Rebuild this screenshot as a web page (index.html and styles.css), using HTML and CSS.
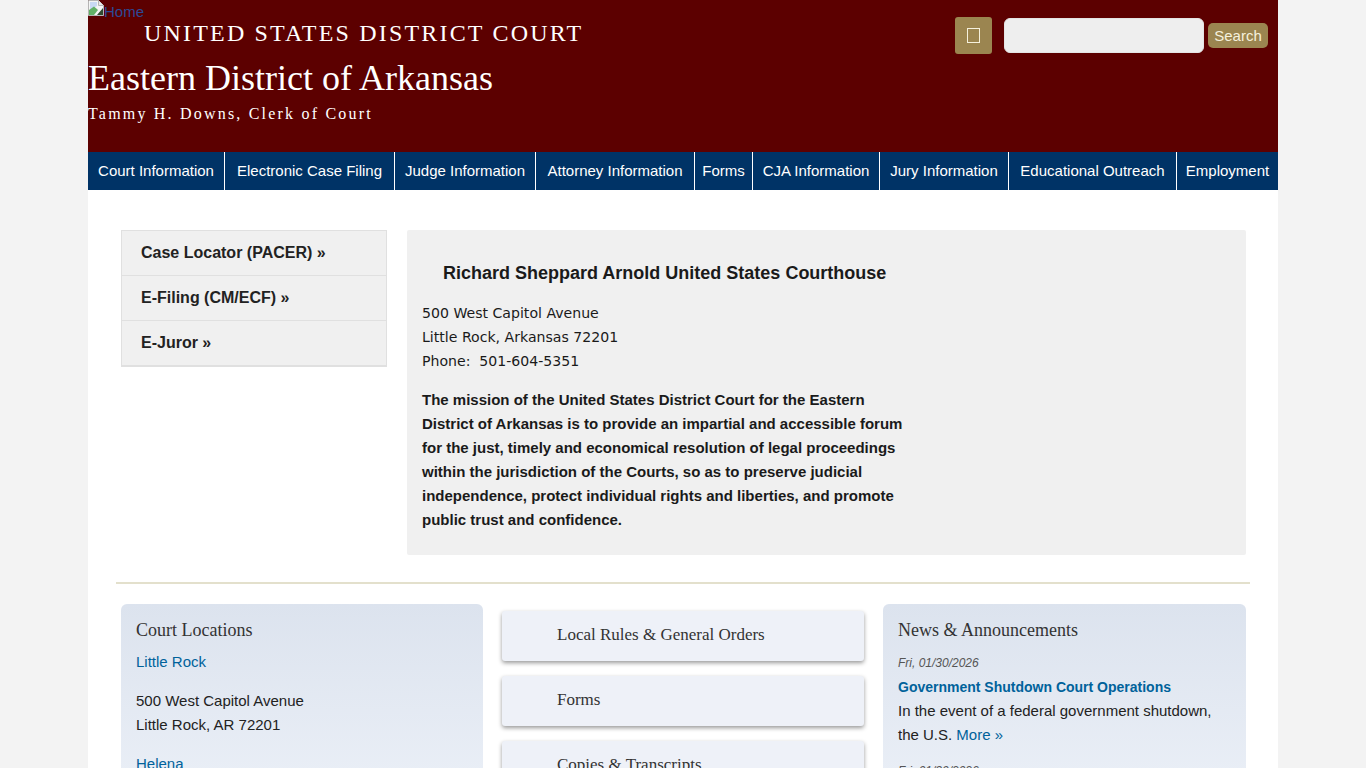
FILE: index.html
```html
<!DOCTYPE html>
<html lang="en">
<head>
  <meta charset="UTF-8" />
  <meta name="viewport" content="width=device-width, initial-scale=1.0"/>
  <title>Eastern District of Arkansas | United States District Court</title>
  <link rel="stylesheet" href="styles.css">
</head>
<body>
  <div id="page">

    <header id="site-header">
      <div class="brand">
        <a class="home-link" href="#">
          <svg class="broken-img" width="16" height="16" viewBox="0 0 16 16" aria-hidden="true">
            <path d="M0.5 0.5H10.5L15.5 5.5V15.5H0.5Z" fill="#f4f4f4" stroke="#b4b4b4"/>
            <path d="M10.5 0.5V5.5H15.5" fill="#e8e8e8" stroke="#b4b4b4"/>
            <path d="M2 2H9V6L2 10Z" fill="#c9d9f4"/>
            <path d="M1 15V10L6 6.5L10 10L6 15Z" fill="#62b066"/>
            <path d="M9 15L15 8V15Z" fill="#2f4a30"/>
          </svg>Home</a>
        <div class="court-line">UNITED STATES DISTRICT COURT</div>
        <div class="district-line">Eastern District of Arkansas</div>
        <div class="clerk-line">Tammy H. Downs, Clerk of Court</div>
      </div>
      <form class="search-box">
        <button type="button" class="menu-btn"><span class="tofu"></span></button>
        <input type="text" class="search-input" />
        <button type="button" class="search-btn">Search</button>
      </form>
    </header>

    <nav id="main-nav">
      <a href="#">Court Information</a>
      <a href="#">Electronic Case Filing</a>
      <a href="#">Judge Information</a>
      <a href="#">Attorney Information</a>
      <a href="#">Forms</a>
      <a href="#">CJA Information</a>
      <a href="#">Jury Information</a>
      <a href="#">Educational Outreach</a>
      <a href="#">Employment</a>
    </nav>

    <main id="content">
      <div class="top-row">
        <ul class="quick-links">
          <li><a href="#">Case Locator (PACER) »</a></li>
          <li><a href="#">E-Filing (CM/ECF) »</a></li>
          <li><a href="#">E-Juror »</a></li>
        </ul>
        <section class="welcome">
          <h2>Richard Sheppard Arnold United States Courthouse</h2>
          <p class="address">500 West Capitol Avenue<br>Little Rock, Arkansas 72201<br>Phone:&nbsp; 501-604-5351</p>
          <p class="mission">The mission of the United States District Court for the Eastern District of Arkansas is to provide an impartial and accessible forum for the just, timely and economical resolution of legal proceedings within the jurisdiction of the Courts, so as to preserve judicial independence, protect individual rights and liberties, and promote public trust and confidence.</p>
        </section>
      </div>

      <hr class="divider">

      <div class="bottom-row">
        <section class="card">
          <h3>Court Locations</h3>
          <a href="#">Little Rock</a>
          <p>500 West Capitol Avenue<br>Little Rock, AR 72201</p>
          <a href="#">Helena</a>
          <p>617 Walnut Street<br>Helena, AR 72342</p>
        </section>

        <div class="tiles">
          <a class="tile" href="#">Local Rules &amp; General Orders</a>
          <a class="tile" href="#">Forms</a>
          <a class="tile" href="#">Copies &amp; Transcripts</a>
        </div>

        <section class="card">
          <h3>News &amp; Announcements</h3>
          <div class="news-item">
            <div class="news-date">Fri, 01/30/2026</div>
            <a class="news-title" href="#">Government Shutdown Court Operations</a>
            <div>In the event of a federal government shutdown, the U.S. <a href="#">More »</a></div>
          </div>
          <div class="news-item">
            <div class="news-date">Fri, 01/30/2026</div>
          </div>
        </section>
      </div>
    </main>

  </div>
</body>
</html>
```

FILE: styles.css
```css
html, body {
  height: 768px;
  overflow: hidden;
}

body {
  margin: 0;
  background-color: #f3f3f3;
  font-family: "Liberation Sans", Arial, sans-serif;
  font-size: 15px;
  line-height: 24px;
  color: #222;
}

a {
  color: #00629b;
  text-decoration: none;
}

#page {
  width: 1190px;
  margin: 0 auto;
  background: #fff;
  min-height: 768px;
}

/* header */
#site-header {
  display: flex;
  justify-content: space-between;
  height: 152px;
  background-color: #5c0000;
}

.brand {
  font-family: "Liberation Serif", "Times New Roman", serif;
  color: #fff;
}

.home-link {
  display: block;
  height: 18px;
  font-family: "Liberation Sans", Arial, sans-serif;
  line-height: 24px;
  color: #2c4a96;
}

.broken-img {
  vertical-align: top;
}

.court-line {
  margin: 0 0 0 56px;
  font-size: 24px;
  line-height: 30px;
  letter-spacing: 2.18px;
}

.district-line {
  margin-top: 9px;
  font-size: 36px;
  line-height: 42px;
}

.clerk-line {
  margin-top: 5px;
  font-size: 16px;
  line-height: 20px;
  letter-spacing: 2.2px;
}

.search-box {
  display: flex;
  align-items: center;
  height: 71px;
  padding-right: 10px;
}

.menu-btn {
  display: flex;
  align-items: center;
  justify-content: center;
  width: 37px;
  height: 37px;
  margin-right: 12px;
  padding: 0;
  background: #9b8550;
  border: none;
  border-radius: 3px;
}

.tofu {
  width: 11px;
  height: 13px;
  border: 1px solid #f5f0dc;
}

.search-input {
  box-sizing: border-box;
  width: 200px;
  height: 35px;
  margin-right: 4px;
  background: #eee;
  border: 1px solid #e4e4e4;
  border-radius: 6px;
}

.search-btn {
  width: 60px;
  height: 25px;
  padding: 0;
  background: #9b8550;
  border: none;
  border-radius: 5px;
  font-family: "Liberation Sans", Arial, sans-serif;
  font-size: 15px;
  color: #f5f0dc;
}

/* nav */
#main-nav {
  display: grid;
  grid-template-columns: 137px 170px 141px 159px 58px 127px 129px 168px 101px;
  height: 38px;
  background-color: #003366;
}

#main-nav a {
  box-sizing: border-box;
  text-align: center;
  border-right: 1px solid #fff;
  line-height: 38px;
  color: #fff;
  white-space: nowrap;
}

#main-nav a:last-child {
  border-right: none;
}

/* main */
#content {
  padding: 40px 28px 0;
}

.top-row {
  display: flex;
  gap: 20px;
  padding: 0 4px 0 5px;
}

.quick-links {
  box-sizing: border-box;
  width: 266px;
  height: 137px;
  margin: 0;
  padding: 0;
  list-style: none;
  background: #f0f0f0;
  border: 1px solid #e0e0e0;
  border-bottom-width: 2px;
  font-size: 16px;
}

.quick-links li {
  height: 44px;
  padding-left: 19px;
  border-bottom: 1px solid #e0e0e0;
  line-height: 43px;
}

.quick-links li:last-child {
  border-bottom: none;
}

.quick-links a {
  font-weight: bold;
  color: #222;
}

.welcome {
  box-sizing: border-box;
  flex: 1;
  height: 325px;
  padding: 30px 15px 0;
  background: #f0f0f0;
  border-radius: 2px;
  color: #1a1a1a;
}

.welcome h2 {
  margin: 0 0 15px 21px;
  font-size: 18px;
  line-height: 26px;
}

.address {
  margin: 0 0 15px;
  font-family: "DejaVu Sans", sans-serif;
  font-size: 14.1px;
}

.mission {
  width: 490px;
  margin: 0;
  font-size: 15px;
  font-weight: bold;
}

.divider {
  height: 2px;
  margin: 27px 0 20px;
  background: #e3e0cc;
  border: none;
}

.bottom-row {
  display: grid;
  grid-template-columns: 362px 362px 1fr;
  gap: 19px;
  padding: 0 4px 0 5px;
}

.card {
  box-sizing: border-box;
  padding: 14px 15px;
  background: linear-gradient(#dce3ee, #e9eef6 170px);
  border-radius: 6px;
}

.card h3 {
  margin: 0 0 8px;
  font-family: "Liberation Serif", "Times New Roman", serif;
  font-size: 18px;
  font-weight: normal;
  line-height: 24px;
  color: #333;
}

.card p {
  margin: 15px 0;
}

.tiles {
  display: flex;
  flex-direction: column;
  gap: 15px;
  padding-top: 7px;
}

.tile {
  height: 50px;
  padding-left: 55px;
  background: #eef1f8;
  border-radius: 3px;
  box-shadow: 0 2px 4px #999;
  font-family: "Liberation Serif", "Times New Roman", serif;
  font-size: 17px;
  line-height: 47px;
  color: #333;
}

.news-item {
  padding-top: 1px;
  margin-bottom: 11px;
}

.news-date {
  font-size: 12px;
  font-style: italic;
  color: #555;
}

.news-title {
  display: block;
  font-size: 14px;
  font-weight: bold;
}
```
